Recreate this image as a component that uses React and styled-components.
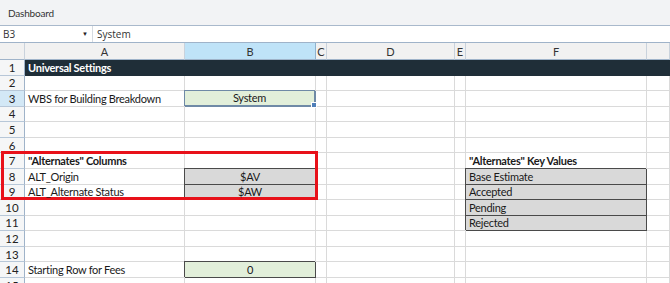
import React from 'react'
import styled, { createGlobalStyle } from 'styled-components'

const GlobalStyle = createGlobalStyle`
  html, body { margin: 0; padding: 0; background: #fff; overflow: hidden; }
  body { font-family: Lato, "Open Sans", sans-serif; }
`

const COLS = ['A', 'B', 'C', 'D', 'E', 'F', 'G']
const ROW_H = 15.57

const Page = styled.div`
  width: 670px;
  height: 283px;
  position: relative;
  overflow: hidden;
`

const TitleBar = styled.div`
  height: 26px;
  background: #f2f3f5;
  border-bottom: 1px solid #a9b9cc;
  box-sizing: border-box;
  display: flex;
  align-items: center;
  padding-left: 8px;
  font-family: Lato, sans-serif;
  font-size: 10px;
  letter-spacing: -0.2px;
  color: #333;
`

const FormulaBar = styled.div`
  height: 16px;
  display: flex;
  align-items: stretch;
  border-bottom: 1px solid #9fb3c9;
  box-sizing: content-box;
  font-family: "Open Sans", sans-serif;
  font-size: 10px;
  color: #333;
`

const NameBox = styled.div`
  width: 93px;
  display: flex;
  align-items: center;
  justify-content: space-between;
  padding: 0 4px 0 3px;
  box-sizing: border-box;
  border-right: 1px solid #d6dbe1;
`

const Caret = styled.span`
  font-size: 6px;
  color: #222;
`

const FormulaText = styled.div`
  display: flex;
  align-items: center;
  padding-left: 4px;
`

const Grid = styled.div`
  display: grid;
  grid-template-columns: 25px 160px 131px 11px 128px 11px 181px 1fr;
  grid-template-rows: 17px repeat(15, ${ROW_H}px);
  font-family: Lato, sans-serif;
  font-size: 11px;
  letter-spacing: -0.28px;
  color: #1a1a1a;
`

const ColHead = styled.div`
  background: ${p => (p.$active ? '#bfe3f8' : '#f1f1f1')};
  border-right: 1px solid ${p => (p.$active ? '#8fb3cf' : '#c9d2dc')};
  border-bottom: 1px solid #9fb3c9;
  box-sizing: border-box;
  display: flex;
  align-items: center;
  justify-content: center;
  font-size: 11px;
  letter-spacing: 0;
  color: #333;
`

const Corner = styled(ColHead)`
  background: #f1f1f1;
`

const RowHead = styled.div`
  background: ${p => (p.$active ? '#d3e8f6' : '#f5f6f7')};
  border-right: 1px solid #9fb3c9;
  border-bottom: 1px solid #b7c7d8;
  box-sizing: border-box;
  display: flex;
  align-items: center;
  justify-content: center;
  font-size: 11.5px;
  letter-spacing: 0;
  color: #222;
`

const Cell = styled.div`
  box-sizing: border-box;
  border-right: 1px solid ${p => (p.$dark ? '#1f2e38' : '#dadada')};
  border-bottom: 1px solid ${p => (p.$dark ? '#1f2e38' : '#dadada')};
  background: ${p => (p.$dark ? '#1f2e38' : '#fff')};
  display: flex;
  align-items: center;
  padding: 0 3px;
  white-space: nowrap;
  overflow: visible;
  min-width: 0;
`

const Label = styled.span`
  font-weight: ${p => (p.$bold ? 700 : 400)};
  color: ${p => (p.$light ? '#fff' : '#1a1a1a')};
  position: relative;
  z-index: 1;
`

const Boxed = styled(Cell)`
  background: ${p => (p.$fill === 'green' ? '#e2efda' : '#d9d9d9')};
  border-right: 1px solid #4a4a4a;
  border-bottom: 1px solid #4a4a4a;
  box-shadow: -1px -1px 0 0 #4a4a4a;
  justify-content: ${p => (p.$center ? 'center' : 'flex-start')};
`

const Selected = styled(Boxed)`
  border-right: 2px solid #6f8aa6;
  border-bottom: 2px solid #6f8aa6;
  box-shadow: -1px -1px 0 0 #6f8aa6;
  position: relative;
`

const Handle = styled.span`
  position: absolute;
  right: -3px;
  bottom: -3px;
  width: 4px;
  height: 4px;
  background: #4f7fb8;
  border: 1px solid #fff;
  z-index: 2;
`

const Highlight = styled.div`
  position: absolute;
  left: 1px;
  top: 151px;
  width: 317px;
  height: 49px;
  border: 3px solid #e8111a;
  box-sizing: border-box;
  pointer-events: none;
`

const rows = {
  1: { A: { text: 'Universal Settings', bold: true } },
  3: { A: { text: 'WBS for Building Breakdown' }, B: { text: 'System', box: 'sel' } },
  7: { A: { text: '"Alternates" Columns', bold: true }, F: { text: '"Alternates" Key Values', bold: true } },
  8: { A: { text: 'ALT_Origin' }, B: { text: '$AV', box: 'gray', center: true }, F: { text: 'Base Estimate', box: 'gray' } },
  9: { A: { text: 'ALT_Alternate Status' }, B: { text: '$AW', box: 'gray', center: true }, F: { text: 'Accepted', box: 'gray' } },
  10: { F: { text: 'Pending', box: 'gray' } },
  11: { F: { text: 'Rejected', box: 'gray' } },
  14: { A: { text: 'Starting Row for Fees' }, B: { text: '0', box: 'green', center: true } },
}

const renderCell = (r, c) => {
  const def = (rows[r] || {})[c]
  const dark = r === 1
  if (def && def.box === 'sel') {
    return (
      <Selected key={c} $fill="green" $center>
        <Label>{def.text}</Label>
        <Handle />
      </Selected>
    )
  }
  if (def && def.box) {
    return (
      <Boxed key={c} $fill={def.box} $center={def.center}>
        <Label>{def.text}</Label>
      </Boxed>
    )
  }
  return (
    <Cell key={c} $dark={dark}>
      {def && <Label $bold={def.bold} $light={dark}>{def.text}</Label>}
    </Cell>
  )
}

export default function App() {
  const rowNums = Array.from({ length: 15 }, (_, i) => i + 1)
  return (
    <Page>
      <GlobalStyle />
      <TitleBar>Dashboard</TitleBar>
      <FormulaBar>
        <NameBox>
          <span>B3</span>
          <Caret>▼</Caret>
        </NameBox>
        <FormulaText>System</FormulaText>
      </FormulaBar>
      <Grid>
        <Corner />
        {COLS.map(c => (
          <ColHead key={c} $active={c === 'B'}>{c === 'G' ? '' : c}</ColHead>
        ))}
        {rowNums.map(r => (
          <React.Fragment key={r}>
            <RowHead $active={r === 3}>{r}</RowHead>
            {COLS.map(c => renderCell(r, c))}
          </React.Fragment>
        ))}
      </Grid>
      <Highlight />
    </Page>
  )
}
